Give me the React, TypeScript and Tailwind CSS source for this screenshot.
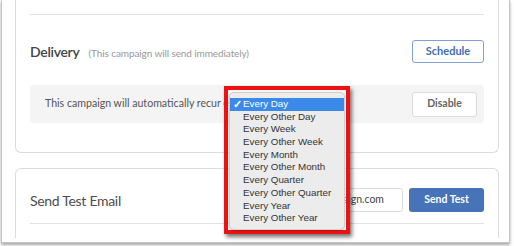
const options = [
  "Every Day",
  "Every Other Day",
  "Every Week",
  "Every Other Week",
  "Every Month",
  "Every Other Month",
  "Every Quarter",
  "Every Other Quarter",
  "Every Year",
  "Every Other Year",
];

const App = () => {
  return (
    <div className="relative w-[514px] h-[246px] bg-white overflow-hidden font-['Lato',sans-serif]">
      <div className="ml-[1px] w-[509px] h-[243px] border-x border-b border-[#c4c4c4] shadow-[0_2px_3px_rgba(0,0,0,0.35)] bg-white">
        <div className="h-[238px] overflow-hidden pl-[13px] pr-[10px]">
          {/* delivery card */}
          <div className="h-[153px] border-x border-b border-[#dcdcdc] rounded-b-md px-[14px]">
            <div className="pt-[14px]">
              <div className="h-px bg-[#e2e2e2]" />
            </div>
            <div className="mt-[25px] h-[23px] flex items-center justify-between">
              <div className="flex items-baseline gap-[9px]">
                <span className="text-[14px] font-semibold tracking-[-0.3px] text-[#444]">Delivery</span>
                <span className="text-[10px] tracking-[-0.1px] text-[#999]">(This campaign will send immediately)</span>
              </div>
              <button className="w-[72px] h-[23px] border border-[#7ea0d3] rounded-[3px] text-[11px] font-bold text-[#3f6db2]">
                Schedule
              </button>
            </div>
            <div className="mt-[22px] h-[38px] bg-[#f4f4f4] rounded-[4px] pl-[15px] pr-[7px] flex items-center justify-between">
              <span className="text-[10.6px] text-[#555]">This campaign will automatically recur every</span>
              <button className="w-[65px] h-[25px] bg-white border border-[#dcdcdc] rounded-[3px] text-[10.5px] font-bold text-[#666]">
                Disable
              </button>
            </div>
          </div>

          {/* test email card */}
          <div className="mt-[15px] h-[80px] border-x border-t border-[#dcdcdc] rounded-t-md px-[14px] pt-[19px]">
            <div className="h-[24px] flex items-center justify-between">
              <span className="text-[14px] tracking-[-0.3px] text-[#4d4d4d]">Send Test Email</span>
              <div className="flex items-center gap-[6px]">
                <div className="w-[150px] h-[24px] border border-[#dcdcdc] rounded-[3px] flex items-center justify-end overflow-hidden pr-[18px] text-[10.5px] text-[#444] whitespace-nowrap">
                  john@mycampaign.com
                </div>
                <button className="w-[75px] h-[24px] bg-[#4774b8] rounded-[3px] text-[10.5px] font-bold text-white">
                  Send Test
                </button>
              </div>
            </div>
            <div className="mt-[11px] h-px bg-[#e2e2e2]" />
          </div>
        </div>
      </div>

      {/* recurrence dropdown, highlighted */}
      <div className="absolute left-[224px] top-[86px] w-[126px] h-[148px] border-4 border-[#ee1111] shadow-[2px_3px_4px_rgba(0,0,0,0.55)] bg-white/40">
        <div className="ml-px mt-[2px] w-[116px] h-[138px] bg-[#ececec] border border-[#cfcfcf] rounded-[5px] pt-[5px] shadow-[0_1px_2px_rgba(0,0,0,0.2)] font-['Liberation_Sans',sans-serif]">
          {options.map((o, i) => (
            <div
              key={o}
              className={
                i === 0
                  ? "h-[12.7px] flex items-center bg-[#3b89e8] text-white text-[9.8px]"
                  : "h-[12.7px] flex items-center text-[#333] text-[9.8px]"
              }
            >
              <span className="w-[13px] pl-[3px] text-[11px] font-bold leading-none">{i === 0 ? "✓" : ""}</span>
              <span>{o}</span>
            </div>
          ))}
        </div>
      </div>
    </div>
  );
};

export default App;
